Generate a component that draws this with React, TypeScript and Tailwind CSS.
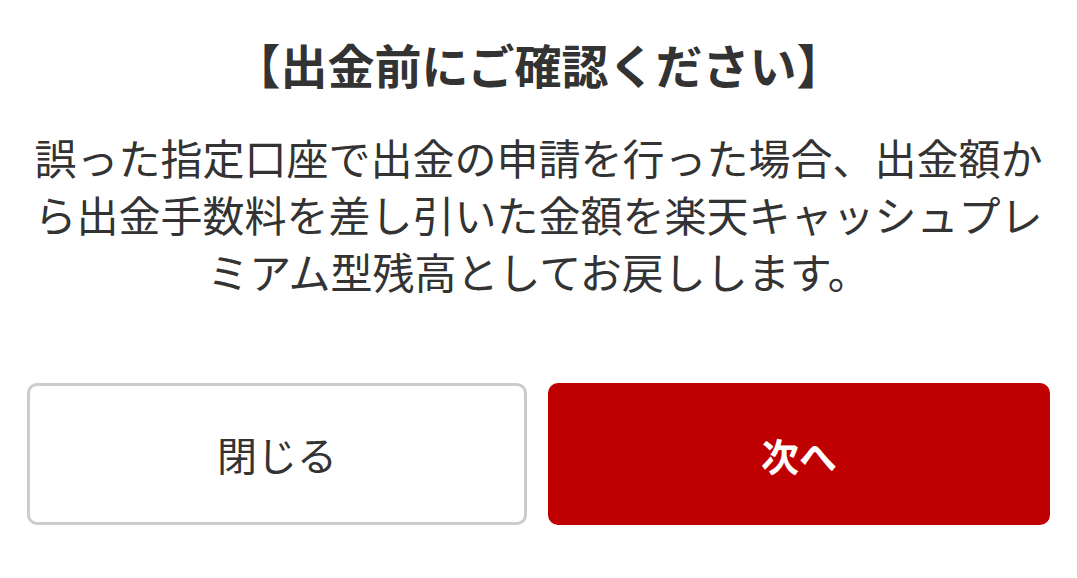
import React from 'react';

const font = { fontFamily: '"Noto Sans CJK JP", "Noto Sans", sans-serif' };

export default function App() {
    return (
        <div className="w-[1077px] h-[578px] bg-white text-[#333333] flex flex-col items-center" style={font}>
            {/* Title */}
            <h1 className="mt-[33px] text-[47px] leading-[62px] font-bold text-center">
                【出金前にご確認ください】
            </h1>

            {/* Message */}
            <p className="mt-[33px] w-[1012px] text-[42px] leading-[57px] text-center">
                誤った指定口座で出金の申請を行った場合、出金額から出金手数料を差し引いた金額を楽天キャッシュプレミアム型残高としてお戻しします。
            </p>

            {/* Actions */}
            <div className="mt-[84px] w-full px-[27px] flex gap-[21px]">
                <button className="w-[500px] h-[142px] rounded-[10px] border-[3px] border-[#cccccc] bg-white text-[40px] text-[#333333]">
                    閉じる
                </button>
                <button className="flex-1 h-[142px] rounded-[10px] bg-[#bf0000] text-[38px] font-bold text-white">
                    次へ
                </button>
            </div>
        </div>
    );
}
